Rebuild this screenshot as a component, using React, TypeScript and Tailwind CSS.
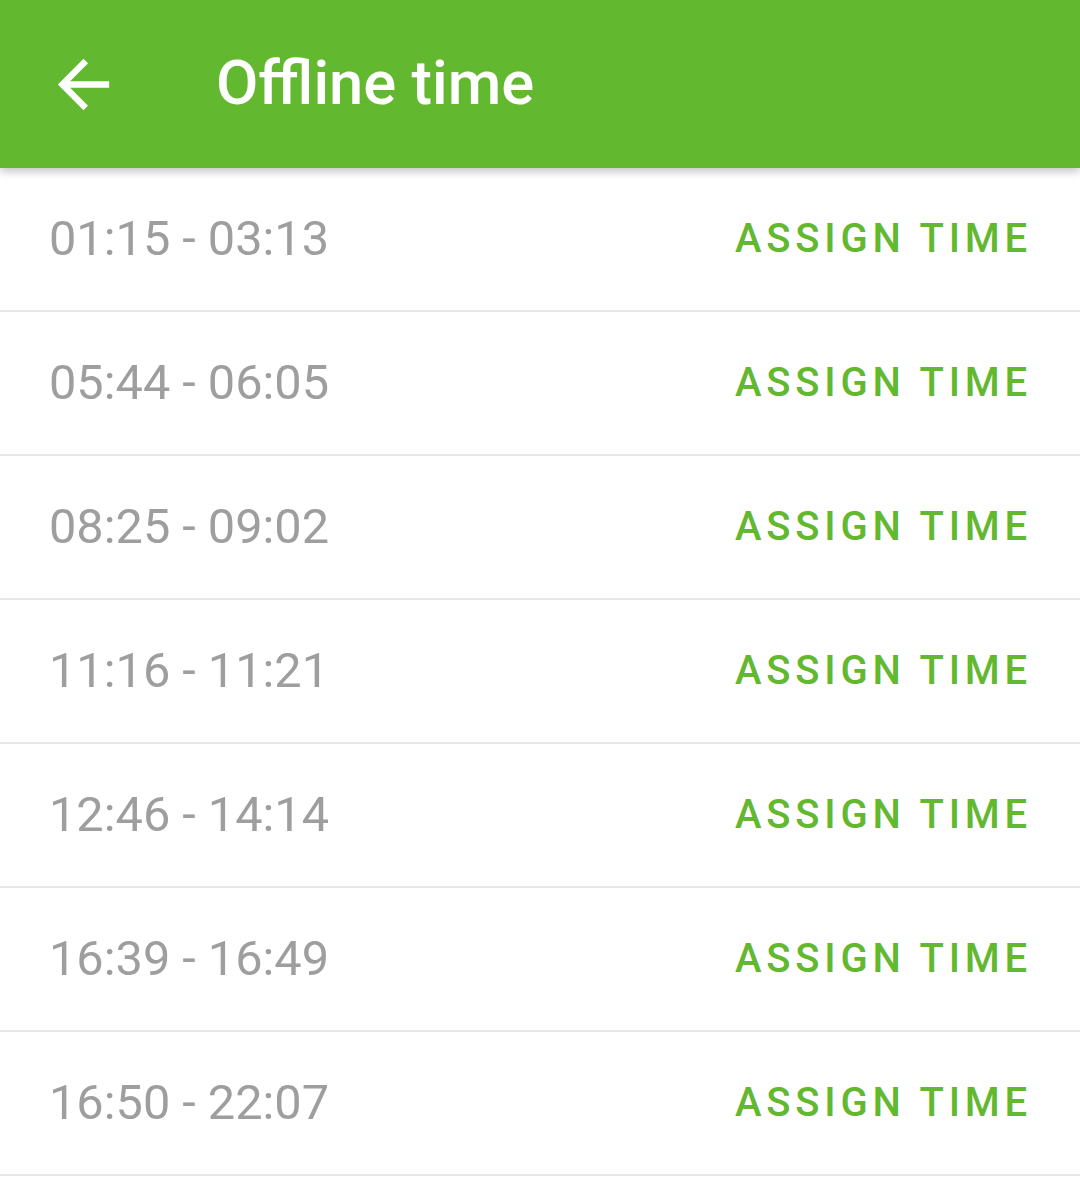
import React from "react";

const slots = [
  "01:15 - 03:13",
  "05:44 - 06:05",
  "08:25 - 09:02",
  "11:16 - 11:21",
  "12:46 - 14:14",
  "16:39 - 16:49",
  "16:50 - 22:07",
];

function BackArrow() {
  return (
    <svg viewBox="0 0 24 24" className="w-[77px] h-[77px]" fill="white">
      <path d="M20 11H7.83l5.59-5.59L12 4l-8 8 8 8 1.41-1.41L7.83 13H20v-2z" />
    </svg>
  );
}

export default function App() {
  return (
    <div className="w-[1080px] h-[1196px] bg-white overflow-hidden font-['Roboto',sans-serif]">
      <header className="relative z-10 h-[168px] bg-[#62b82f] flex items-center shadow-[0_4px_8px_rgba(0,0,0,0.22)]">
        <div className="ml-[45px] mr-[94px] flex items-center">
          <BackArrow />
        </div>
        <h1 className="text-white text-[61.5px] font-medium leading-none">Offline time</h1>
      </header>
      <ul>
        {slots.map((s) => (
          <li
            key={s}
            className="h-[144px] flex items-center justify-between pl-[49px] pr-[50px] border-b-2 border-[#e8e8ec]"
          >
            <span className="text-[48.7px] text-[#9e9e9e] leading-none">{s}</span>
            <button className="text-[40px] font-medium text-[#62b82f] tracking-[0.12em] leading-none mr-[-2px]">
              ASSIGN TIME
            </button>
          </li>
        ))}
      </ul>
    </div>
  );
}
